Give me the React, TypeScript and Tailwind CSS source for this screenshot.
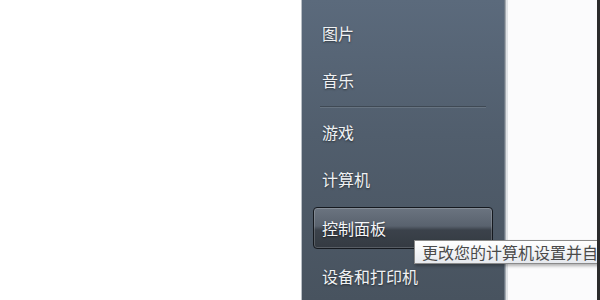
const font = { fontFamily: '"Noto Sans CJK SC", "Noto Sans", sans-serif' }

function Item({ label, active }: { label: string; active?: boolean }) {
  if (active) {
    return (
      <div className="mx-[11px] flex h-[42px] items-center rounded-[4px] border border-[#15191f] bg-[linear-gradient(to_bottom,#6b7480_0%,#59626e_45%,#3b424b_55%,#343a42_100%)] pl-[8px] shadow-[inset_0_0_0_1px_rgba(255,255,255,0.18)]">
        <span className="text-[16px] text-[#f4f6f8] [text-shadow:0_1px_2px_rgba(0,0,0,0.6)]">{label}</span>
      </div>
    )
  }
  return (
    <div className="flex h-[48px] items-center pl-[20px]">
      <span className="text-[16px] text-[#f0f2f4] [text-shadow:0_1px_2px_rgba(0,0,0,0.5)]">{label}</span>
    </div>
  )
}

export default function App() {
  return (
    <div className="relative flex h-[300px] w-[600px] overflow-hidden bg-white" style={font}>
      <div className="w-[301px] bg-white" />
      <div className="w-px bg-[#b9bfc6]" />
      <div className="flex w-[202px] flex-col bg-[linear-gradient(to_bottom,#5b6a7c_0%,#515e6d_45%,#48535f_100%)] pt-[9px]">
        <Item label="图片" />
        <Item label="音乐" />
        <div className="flex h-[4px] items-center px-[18px]">
          <div className="h-px w-full bg-[#3f4954] shadow-[0_1px_0_rgba(255,255,255,0.12)]" />
        </div>
        <Item label="游戏" />
        <Item label="计算机" />
        <div className="flex h-[50px] items-center">
          <div className="w-full">
            <Item label="控制面板" active />
          </div>
        </div>
        <Item label="设备和打印机" />
      </div>
      <div className="w-px bg-[#6f7a86]" />
      <div className="w-px bg-[#a3a9b0]" />
      <div className="w-[2px] bg-[#dfe2e5]" />
      <div className="flex-1 bg-[#fbfbfc]" />
      <div className="relative z-10 w-[3px] bg-[#2b2b2b]" />

      <div className="absolute left-[414px] top-[240px] flex h-[24px] w-[186px] items-center overflow-hidden border border-r-0 border-[#8a8a8a] bg-[linear-gradient(to_bottom,#ffffff,#e6e9ee)] pl-[7px] shadow-[1px_2px_3px_rgba(0,0,0,0.3)]">
        <span className="whitespace-nowrap text-[16px] leading-none text-[#4a4a4a]">更改您的计算机设置并自</span>
      </div>
    </div>
  )
}
